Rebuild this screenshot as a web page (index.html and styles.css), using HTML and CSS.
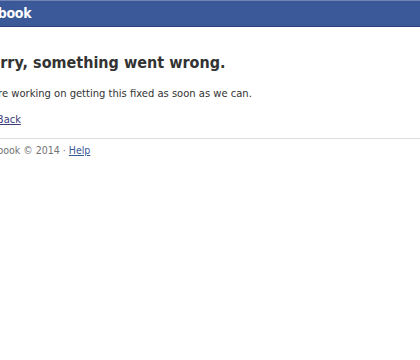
FILE: index.html
```html
<!DOCTYPE html>
<html lang="en">
<head>
    <meta charset="UTF-8">
    <title>Facebook</title>
    <link rel="stylesheet" href="styles.css">
</head>
<body>
    <div class="topbar">
        <div class="inner">
            <span class="logo">facebook</span>
        </div>
    </div>

    <div class="content inner">
        <h1>Sorry, something went wrong.</h1>
        <p>We're working on getting this fixed as soon as we can.</p>
        <a href="#" class="back">Go Back</a>
    </div>

    <div class="footer">
        <div class="inner">
            Facebook &copy; 2014 &middot; <a href="#">Help</a>
        </div>
    </div>
</body>
</html>
```

FILE: styles.css
```css
body {
    margin: 0;
    font-family: "DejaVu Sans Condensed", "DejaVu Sans", sans-serif;
    font-size: 11px;
    color: #333;
    background: #fff;
}

.inner {
    margin-left: -20px;
}

.topbar {
    background: #3b5998;
    border-top: 1px solid #6d84b4;
    border-bottom: 1px solid #29447e;
    height: 25px;
}

.logo {
    display: block;
    margin-left: -11px;
    color: #fff;
    font-weight: bold;
    font-size: 14px;
    line-height: 25px;
    letter-spacing: -0.3px;
}

.content {
    padding-top: 26px;
}

.content h1 {
    margin: 0 0 15px;
    font-size: 16px;
    color: #333;
}

.content p {
    margin: 0 0 13px;
    font-size: 11.1px;
}

.back {
    color: #3b3b7a;
}

.footer {
    margin-top: 12px;
    border-top: 1px solid #ddd;
    padding-top: 5px;
    color: #737373;
    font-size: 10.5px;
}

.footer .inner {
    margin-left: -24px;
}

.footer a {
    color: #3b5998;
}
```
